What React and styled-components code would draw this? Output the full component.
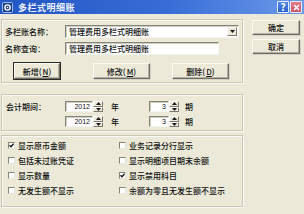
import React from 'react';
import styled, { createGlobalStyle, css } from 'styled-components';

const GlobalStyle = createGlobalStyle`
  html, body {
    margin: 0;
    padding: 0;
    background: #ece9d8;
  }
  * { box-sizing: border-box; }
`

const Window = styled.div`
  width: 304px;
  height: 214px;
  display: flex;
  flex-direction: column;
  background: #ece9d8;
  font-family: "Noto Sans CJK SC", "Liberation Sans", sans-serif;
  font-size: 8px;
  font-weight: 500;
  color: #111;
  overflow: hidden;
`

const TitleBar = styled.div`
  height: 14px;
  display: flex;
  align-items: center;
  padding: 0 2px;
  background: linear-gradient(to right, #2256c4 0%, #386dd6 55%, #6a9aea 100%);
  color: #fff;
`

const TitleText = styled.span`
  margin-left: 5px;
  font-size: 9px;
  font-weight: bold;
  letter-spacing: 0.5px;
  flex: 1;
  color: #eef3ff;
`

const CapButton = styled.div`
  width: 12px;
  height: 12px;
  display: flex;
  align-items: center;
  justify-content: center;
  border: 1px solid #e8eefc;
  border-radius: 1px;
  margin-left: 1px;
  font-size: 10px;
  font-weight: bold;
  line-height: 1;
  color: #fff;
  background: ${p => p.$close ? 'linear-gradient(#e27b8c, #c9546a)' : 'linear-gradient(#4f86e6, #2d62cf)'};
`

const Body = styled.div`
  flex: 1;
  display: flex;
  padding: 0 3px 0 1px;
`

const Left = styled.div`
  width: 242px;
  display: flex;
  flex-direction: column;
`

const Group = styled.div`
  margin-top: ${p => p.$top}px;
  border: 1px solid #cac6b3;
  box-shadow: inset 1px 1px 0 #fbfaf6, 1px 1px 0 #fbfaf6;
  padding: ${p => p.$pad};
`

const FieldRow = styled.div`
  display: flex;
  align-items: center;
  height: 13px;
  margin-bottom: ${p => p.$mb || 0}px;
`

const Label = styled.span`
  width: ${p => p.$w}px;
  flex-shrink: 0;
  white-space: nowrap;
`

const sunken = css`
  background: #fff;
  border-top: 1px solid #858478;
  border-left: 1px solid #858478;
  border-right: 1px solid #f6f5ef;
  border-bottom: 1px solid #f6f5ef;
  box-shadow: inset 1px 1px 0 #cfcdc0;
`

const TextBox = styled.div`
  ${sunken};
  width: ${p => p.$w}px;
  height: 13px;
  display: flex;
  align-items: center;
  padding-left: 3px;
  white-space: nowrap;
  overflow: hidden;
`

const ComboText = styled.span`
  flex: 1;
`

const DropButton = styled.div`
  width: 10px;
  height: 9px;
  margin-right: 1px;
  display: flex;
  align-items: center;
  justify-content: center;
  background: #ece9d8;
  border-top: 1px solid #fff;
  border-left: 1px solid #fff;
  border-right: 1px solid #7d7b70;
  border-bottom: 1px solid #7d7b70;
`

const ButtonRow = styled.div`
  display: flex;
  gap: 22px;
  padding-left: 9px;
`

const Button = styled.div`
  width: ${p => p.$w}px;
  height: ${p => p.$h}px;
  margin-left: ${p => p.$ml || 0}px;
  display: flex;
  align-items: center;
  justify-content: center;
  background: #ece9d8;
  border-top: 1px solid #fbfaf5;
  border-left: 1px solid #fbfaf5;
  border-right: 1px solid #6f6e66;
  border-bottom: 1px solid #6f6e66;
  box-shadow: ${p => p.$focus
    ? '0 0 0 1px #2a2a26, inset -1px -1px 0 #b3b0a2'
    : 'inset -1px -1px 0 #b3b0a2, 1px 1px 0 #d6d3c4'};
  white-space: nowrap;
`

const Key = styled.u`
  text-decoration: underline;
  margin-left: 1px;
`

const Right = styled.div`
  display: flex;
  flex-direction: column;
  gap: 4px;
  margin-left: 9px;
  padding-top: 6px;
`

const PeriodGrid = styled.div`
  display: grid;
  grid-template-columns: 59px 38px 8px 8px 30px 30px 6px 8px;
  grid-template-rows: 11px 11px;
  row-gap: 4px;
  align-items: center;
`

const Spin = styled.div`
  display: flex;
  height: 11px;
`

const SpinInput = styled.div`
  ${sunken};
  flex: 1;
  height: 11px;
  display: flex;
  align-items: center;
  justify-content: flex-end;
  padding-right: 2px;
  font-family: "Liberation Sans", sans-serif;
  font-size: 7px;
  font-weight: normal;
`

const SpinArrows = styled.div`
  width: 10px;
  display: flex;
  flex-direction: column;
`

const SpinHalf = styled.div`
  flex: 1;
  display: flex;
  align-items: center;
  justify-content: center;
  background: #ece9d8;
  border-top: 1px solid #fff;
  border-left: 1px solid #fff;
  border-right: 1px solid #7d7b70;
  border-bottom: 1px solid #7d7b70;
`

const Unit = styled.span`
  grid-column: ${p => p.$col};
`

const CheckGrid = styled.div`
  display: grid;
  grid-template-columns: 111px 1fr;
  grid-auto-rows: 15px;
  align-items: center;
`

const CheckItem = styled.div`
  display: flex;
  align-items: center;
  gap: 3px;
  white-space: nowrap;
`

const Box = styled.div`
  width: 7px;
  height: 7px;
  background: #fff;
  border-top: 1px solid #858478;
  border-left: 1px solid #858478;
  border-right: 1px solid #e8e6dc;
  border-bottom: 1px solid #e8e6dc;
  display: flex;
  align-items: center;
  justify-content: center;
`

const Tri = ({ up }) => (
  <svg width="5" height="3" viewBox="0 0 5 3">
    <path d={up ? 'M2.5 0L5 3H0Z' : 'M0 0H5L2.5 3Z'} fill="#1a1a1a" />
  </svg>
)

const Check = ({ on }) => (
  <Box>
    {on && (
      <svg width="5" height="5" viewBox="0 0 5 5">
        <path d="M0.5 2.2L2 3.8L4.6 0.8" stroke="#111" strokeWidth="1.3" fill="none" />
      </svg>
    )}
  </Box>
)

const SpinBox = ({ value }) => (
  <Spin>
    <SpinInput>{value}</SpinInput>
    <SpinArrows>
      <SpinHalf><Tri up /></SpinHalf>
      <SpinHalf><Tri /></SpinHalf>
    </SpinArrows>
  </Spin>
)

const options = [
  ['显示原币金额', true], ['业务记录分行显示', false],
  ['包括未过账凭证', false], ['显示明细项目期末余额', false],
  ['显示数量', false], ['显示禁用科目', true],
  ['无发生额不显示', false], ['余额为零且无发生额不显示', false],
]

const App = () => (
  <Window>
    <GlobalStyle />
    <TitleBar>
      <svg width="11" height="11" viewBox="0 0 11 11">
        <rect x="0.5" y="0.5" width="10" height="10" rx="1" fill="#1d3f8f" stroke="#9fbdf0" />
        <circle cx="5.5" cy="5.5" r="2.6" fill="none" stroke="#fff" strokeWidth="1.4" />
        <circle cx="5.5" cy="5.5" r="0.8" fill="#fff" />
      </svg>
      <TitleText>多栏式明细账</TitleText>
      <CapButton>?</CapButton>
      <CapButton $close>
        <svg width="7" height="7" viewBox="0 0 7 7">
          <path d="M1 1L6 6M6 1L1 6" stroke="#fff" strokeWidth="1.5" />
        </svg>
      </CapButton>
    </TitleBar>
    <Body>
      <Left>
        <Group $top={5} $pad="5px 0 3px 3px">
          <FieldRow $mb={4}>
            <Label $w={60}>多栏账名称：</Label>
            <TextBox $w={174}>
              <ComboText>管理费用多栏式明细账</ComboText>
              <DropButton><Tri /></DropButton>
            </TextBox>
          </FieldRow>
          <FieldRow $mb={8}>
            <Label $w={60}>名称查询：</Label>
            <TextBox $w={154}>管理费用多栏式明细账</TextBox>
          </FieldRow>
          <ButtonRow>
            <Button $w={46} $h={16} $focus>新增(<Key>N</Key>)</Button>
            <Button $w={57} $h={16} $ml={11}>修改(<Key>M</Key>)</Button>
            <Button $w={57} $h={16}>删除(<Key>D</Key>)</Button>
          </ButtonRow>
        </Group>
        <Group $top={11} $pad="6px 0 3px 4px">
          <PeriodGrid>
            <Label $w={59}>会计期间：</Label>
            <SpinBox value="2012" />
            <span />
            <span>年</span>
            <span />
            <SpinBox value="3" />
            <span />
            <span>期</span>
            <span />
            <SpinBox value="2012" />
            <span />
            <span>年</span>
            <span />
            <SpinBox value="3" />
            <span />
            <Unit $col={8}>期</Unit>
          </PeriodGrid>
        </Group>
        <Group $top={4} $pad="2px 0 8px 6px">
          <CheckGrid>
            {options.map(([text, on]) => (
              <CheckItem key={text}>
                <Check on={on} />
                <span>{text}</span>
              </CheckItem>
            ))}
          </CheckGrid>
        </Group>
      </Left>
      <Right>
        <Button $w={48} $h={15}>确定</Button>
        <Button $w={48} $h={15}>取消</Button>
      </Right>
    </Body>
  </Window>
)

export default App
